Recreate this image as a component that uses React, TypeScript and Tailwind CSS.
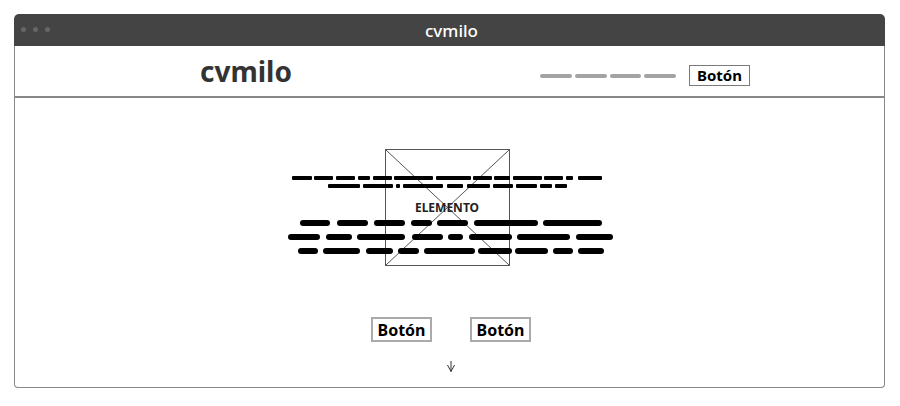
import React from "react";

/** Dash rows of the wireframe text, as [start, end] x positions on the page */
const THIN_ROWS: [number, number][][] = [
  [
    [292, 312], [314, 333], [336, 355], [358, 370], [373, 392], [394, 433],
    [436, 471], [473, 492], [494, 510], [513, 542], [544, 563], [566, 573], [578, 602],
  ],
  [
    [328, 360], [363, 393], [396, 400], [403, 443], [447, 463], [467, 490],
    [493, 513], [516, 537], [540, 552], [555, 567],
  ],
];

const THICK_ROWS: [number, number][][] = [
  [[300, 330], [337, 368], [374, 405], [411, 432], [437, 468], [474, 538], [543, 602]],
  [[288, 320], [326, 352], [357, 405], [412, 443], [448, 463], [469, 512], [517, 570], [576, 613]],
  [[298, 318], [323, 360], [366, 393], [398, 419], [424, 475], [478, 512], [515, 548], [553, 573], [578, 604]],
];

const ORIGIN = 288;

function DashRow({ dashes, thick }: { dashes: [number, number][]; thick?: boolean }) {
  return (
    <div className={thick ? "flex h-[6px]" : "flex h-[4px]"}>
      {dashes.map(([start, end], i) => {
        const prev = i === 0 ? ORIGIN : dashes[i - 1][1];
        return (
          <span
            key={i}
            className={thick ? "block h-full rounded-full bg-black" : "block h-full rounded-[1px] bg-black"}
            style={{ width: end - start, marginLeft: start - prev }}
          />
        );
      })}
    </div>
  );
}

function Button({ small }: { small?: boolean }) {
  return small ? (
    <div className="flex h-[21px] w-[61px] items-center justify-center border border-[#7a7a7a] bg-white text-[15px] font-bold leading-none text-black">
      Botón
    </div>
  ) : (
    <div className="flex h-[25px] w-[61px] items-center justify-center border-2 border-[#aaaaaa] bg-white text-[16px] font-bold leading-none text-black">
      Botón
    </div>
  );
}

function ImagePlaceholder() {
  return (
    <div className="relative -ml-[4px] mt-[1px] h-[117px] w-[125px]">
      <div className="absolute inset-0 border border-[#555]">
        <svg className="h-full w-full" viewBox="0 0 123 115" preserveAspectRatio="none">
          <line x1="0" y1="0" x2="123" y2="115" stroke="#555" strokeWidth="1" />
          <line x1="123" y1="0" x2="0" y2="115" stroke="#555" strokeWidth="1" />
        </svg>
      </div>

      {/* text lines lying over the picture */}
      <div className="absolute left-[-97px] top-[27px] w-[326px]">
        <div className="flex flex-col gap-[4px]">
          {THIN_ROWS.map((row, i) => (
            <DashRow key={i} dashes={row} />
          ))}
        </div>
        <div className="mt-[13px] flex justify-center pr-[8px] text-[12px] font-bold leading-[14px] text-[#222]">
          ELEMENTO
        </div>
        <div className="mt-[5px] flex flex-col gap-[8px]">
          {THICK_ROWS.map((row, i) => (
            <DashRow key={i} dashes={row} thick />
          ))}
        </div>
      </div>
    </div>
  );
}

export default function App() {
  return (
    <div
      className="h-[406px] w-[900px] overflow-hidden bg-white pl-[14px] pt-[14px]"
      style={{ fontFamily: '"Noto Sans", "Open Sans", sans-serif' }}
    >
      <div className="w-[871px]">
        {/* window title bar */}
        <div className="relative flex h-[32px] items-center justify-center rounded-t-[5px] bg-[#444444]">
          <div className="absolute left-[7px] top-[13px] flex gap-[7px]">
            <span className="block h-[5px] w-[5px] rounded-full bg-[#666]" />
            <span className="block h-[5px] w-[5px] rounded-full bg-[#666]" />
            <span className="block h-[5px] w-[5px] rounded-full bg-[#666]" />
          </div>
          <span className="pl-[4px] text-[17px] font-medium leading-none text-white">cvmilo</span>
        </div>

        <div className="h-[342px] rounded-b-[4px] border-x border-b border-[#888]">
          {/* page header */}
          <div className="flex h-[52px] items-center border-b-2 border-[#888]">
            <div className="ml-[185px] text-[28px] font-bold leading-none text-[#333]">cvmilo</div>
            <div className="ml-auto mr-[134px] mt-[9px] flex items-center">
              <div className="flex gap-[3px]">
                <span className="block h-[4px] w-[32px] rounded-full bg-[#a3a3a3]" />
                <span className="block h-[4px] w-[32px] rounded-full bg-[#a3a3a3]" />
                <span className="block h-[4px] w-[31px] rounded-full bg-[#a3a3a3]" />
                <span className="block h-[4px] w-[32px] rounded-full bg-[#a3a3a3]" />
              </div>
              <div className="ml-[13px]">
                <Button small />
              </div>
            </div>
          </div>

          {/* hero */}
          <div className="flex flex-col items-center pt-[50px]">
            <ImagePlaceholder />
            <div className="ml-[3px] mt-[51px] flex gap-[38px]">
              <Button />
              <Button />
            </div>
            <svg className="ml-[3px] mt-[19px]" width="8" height="11" viewBox="0 0 8 11">
              <line x1="4" y1="0" x2="4" y2="10.5" stroke="#333" strokeWidth="1" />
              <line x1="0.5" y1="4" x2="4" y2="10.5" stroke="#333" strokeWidth="1" />
              <line x1="7.5" y1="4" x2="4" y2="10.5" stroke="#333" strokeWidth="1" />
            </svg>
          </div>
        </div>
      </div>
    </div>
  );
}
